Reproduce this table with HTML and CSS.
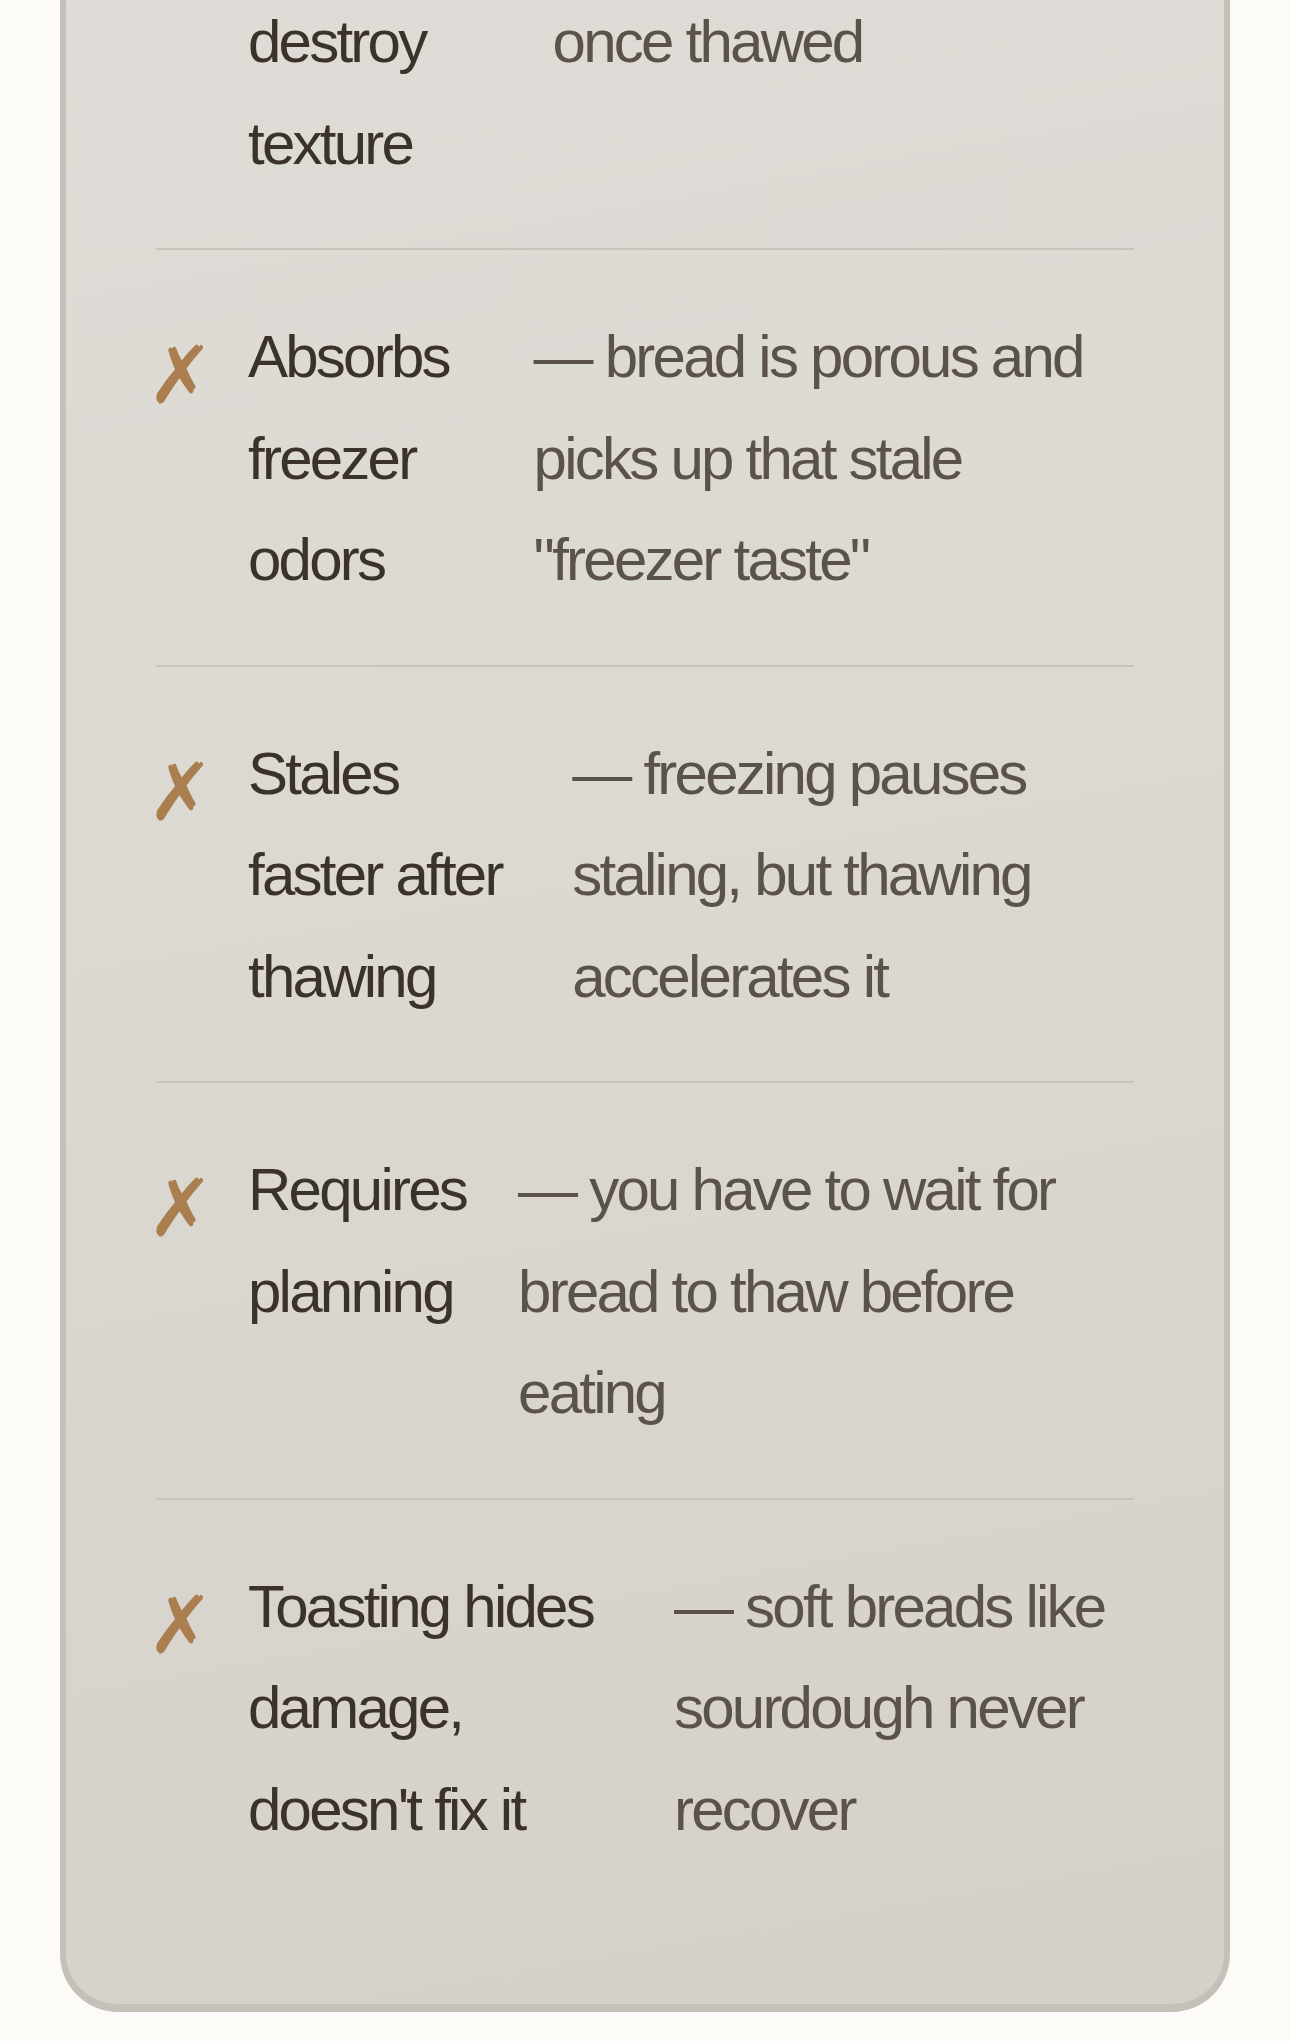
FILE: index.html
```html
<!DOCTYPE html>
<html lang="en">
<head>
<meta charset="utf-8">
<title>Freezing bread — cons</title>
<link rel="stylesheet" href="styles.css">
</head>
<body>
<main class="page">
  <section class="card">
    <ul class="cons">
      <li class="con">
        <span class="mark">✗</span>
        <span class="label">Ice crystals destroy texture</span>
        <span class="desc">— ice crystals form and the crumb turns soggy once thawed</span>
      </li>
      <li class="con">
        <span class="mark">✗</span>
        <span class="label">Absorbs freezer odors</span>
        <span class="desc">— bread is porous and picks up that stale "freezer taste"</span>
      </li>
      <li class="con">
        <span class="mark">✗</span>
        <span class="label">Stales faster after thawing</span>
        <span class="desc">— freezing pauses staling, but thawing accelerates it</span>
      </li>
      <li class="con">
        <span class="mark">✗</span>
        <span class="label">Requires planning</span>
        <span class="desc">— you have to wait for bread to thaw before eating</span>
      </li>
      <li class="con">
        <span class="mark">✗</span>
        <span class="label">Toasting hides damage, doesn't fix it</span>
        <span class="desc">— soft breads like sourdough never recover</span>
      </li>
    </ul>
  </section>
</main>
</body>
</html>
```
FILE: styles.css
```css
* { box-sizing: border-box; }

html, body {
  margin: 0;
  padding: 0;
}

body {
  background: #fcfbf8;
  font-family: "Liberation Sans", Arial, Helvetica, sans-serif;
  overflow: hidden;
}

.page {
  padding: 0 60px 31px;
}

.card {
  margin-top: -364px;
  border: 6px solid #c5c0b8;
  border-bottom-width: 8px;
  border-radius: 58px;
  background: linear-gradient(170deg, #e0ddd8 0%, #dcd8d2 50%, #d5d1ca 100%);
  padding: 90px;
}

.cons {
  list-style: none;
  margin: 0;
  padding: 0;
}

.con {
  display: flex;
  align-items: flex-start;
  gap: 47px;
  padding: 56px 0 54px;
  border-bottom: 2px solid #c8c3bb;
  font-size: 60px;
  line-height: 101.5px;
  letter-spacing: -0.046em;
}

.con:last-child {
  border-bottom: none;
}

.mark {
  flex: none;
  width: 54px;
  margin-left: -9px;
  padding-top: 19px;
  font-family: "DejaVu Sans", sans-serif;
  font-size: 80px;
  font-weight: bold;
  letter-spacing: 0;
  color: #ab7e4f;
  line-height: 101.5px;
}

.label {
  color: #3b3229;
}

.desc {
  color: #5b5349;
}
```
